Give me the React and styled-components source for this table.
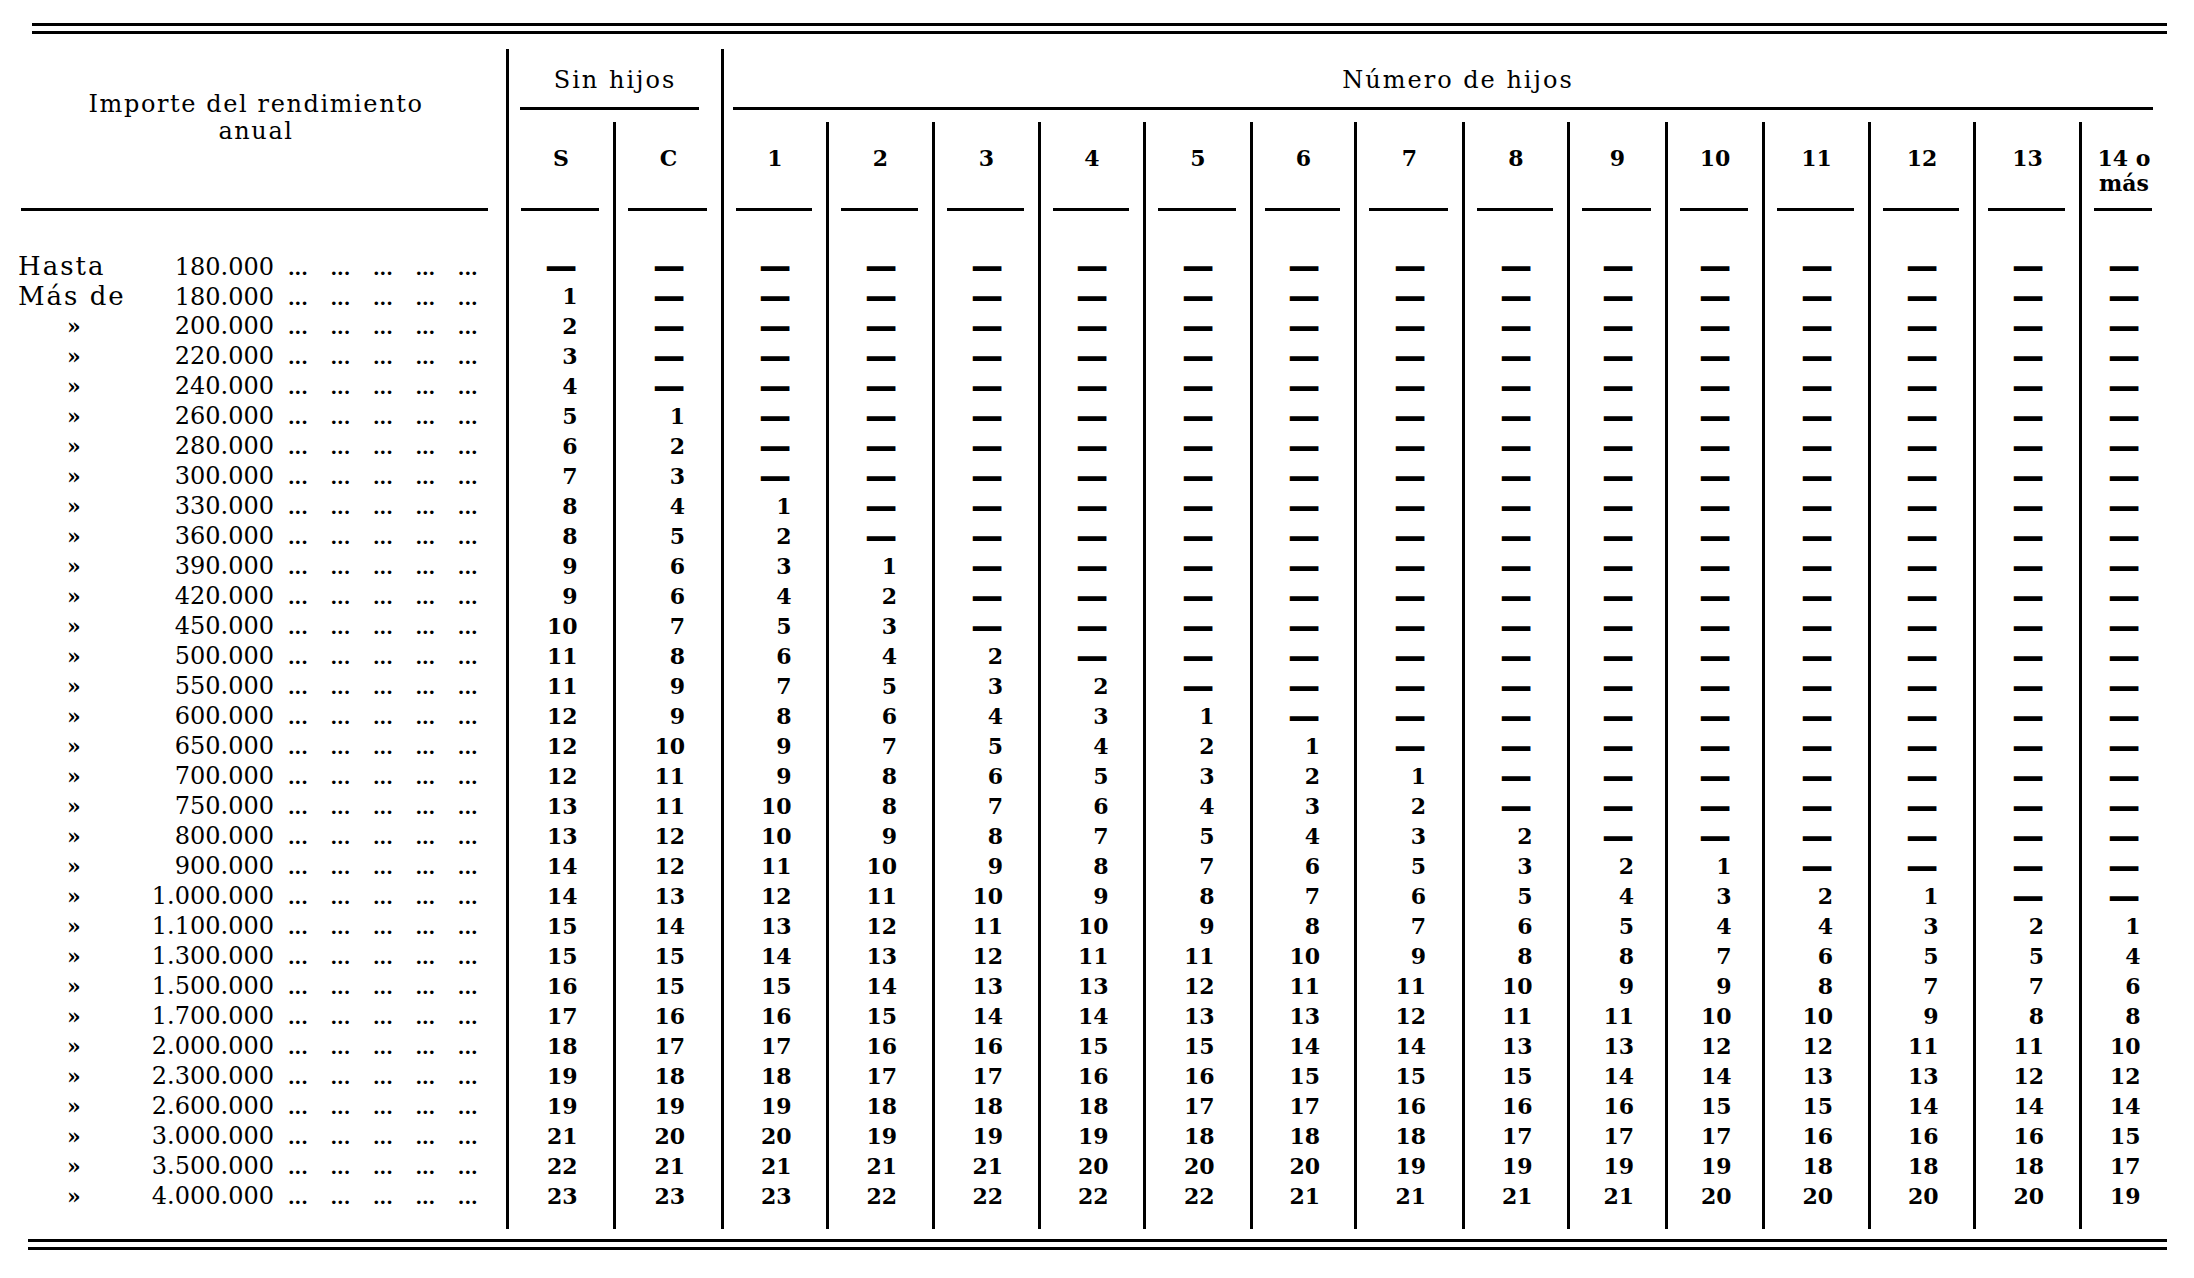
import React from "react";
import styled, { createGlobalStyle } from "styled-components";

const GlobalStyle = createGlobalStyle`
  html, body {
    margin: 0;
    padding: 0;
    background: #fff;
  }
  body {
    color: #000;
    font-family: "DejaVu Serif", "Liberation Serif", serif;
  }
`;

const Page = styled.div`
  width: 2194px;
  height: 1278px;
  box-sizing: border-box;
  padding: 23px 0 0 18px;
  background: #fff;
`;

const DoubleRule = styled.div`
  margin-left: ${(p) => p.$indent}px;
  margin-top: ${(p) => p.$top || 0}px;
  width: ${(p) => p.$width}px;
  height: 5px;
  border-top: 3px solid #000;
  border-bottom: 3px solid #000;
`;

const Table = styled.div`
  display: flex;
  margin-top: 15px;
  height: 1180px;
`;

const LabelColumn = styled.div`
  width: 488px;
  display: flex;
  flex-direction: column;
`;

const LabelHead = styled.div`
  height: 202px;
  display: flex;
  flex-direction: column;
`;

const LabelTitle = styled.div`
  height: 159px;
  box-sizing: border-box;
  padding: 42px 12px 0 0;
  text-align: center;
  font-size: 24px;
  line-height: 27px;
  letter-spacing: 1.6px;
`;

const HeadRule = styled.div`
  height: 3px;
  background: #000;
  margin: ${(p) => p.$margin};
`;

const LabelRow = styled.div`
  height: 30px;
  display: flex;
  align-items: baseline;
  line-height: 30px;
  white-space: nowrap;
`;

const Prefix = styled.span`
  width: 120px;
  flex: none;
  box-sizing: border-box;
  padding-left: ${(p) => (p.$mark ? 49 : 0)}px;
  font-size: ${(p) => (p.$mark ? 22 : 26)}px;
  font-weight: ${(p) => (p.$mark ? 700 : 400)};
  letter-spacing: ${(p) => (p.$mark ? 0 : 2)}px;
`;

const Amount = styled.span`
  width: 136px;
  flex: none;
  text-align: right;
  font-size: 24px;
`;

const Leader = styled.span`
  margin-left: 14px;
  font-size: 19px;
  font-weight: 700;
  word-spacing: 16px;
  white-space: pre;
`;

const Group = styled.div`
  border-left: 3px solid #000;
  display: flex;
  flex-direction: column;
`;

const GroupTitle = styled.div`
  height: 73px;
  display: flex;
  flex-direction: column;
`;

const GroupText = styled.div`
  height: 58px;
  box-sizing: border-box;
  padding: 18px 0 0 ${(p) => p.$shift || 0}px;
  text-align: center;
  font-size: 24px;
  line-height: 27px;
  letter-spacing: 2px;
`;

const SubRow = styled.div`
  display: flex;
  flex: 1;
`;

const SubCol = styled.div`
  width: ${(p) => p.$width}px;
  box-sizing: border-box;
  border-left: ${(p) => (p.$first ? "none" : "3px solid #000")};
  display: flex;
  flex-direction: column;
`;

const SubHead = styled.div`
  height: 129px;
  display: flex;
  flex-direction: column;
`;

const SubLabel = styled.div`
  height: 86px;
  box-sizing: border-box;
  padding-top: 24px;
  text-align: center;
  font-size: 22px;
  font-weight: 700;
  line-height: 25px;
`;

const Cell = styled.div`
  height: 30px;
  display: flex;
  align-items: center;
  justify-content: center;
`;

const Num = styled.span`
  width: 33px;
  text-align: right;
  font-size: 22px;
  font-weight: 700;
  line-height: 30px;
`;

const Dash = styled.span`
  display: inline-block;
  font-size: 22px;
  font-weight: 700;
  line-height: 22px;
  -webkit-text-stroke: 1.6px #000;
  transform: scale(1.35, 1.1);
`;

const amounts = [
  "180.000", "180.000", "200.000", "220.000", "240.000", "260.000", "280.000",
  "300.000", "330.000", "360.000", "390.000", "420.000", "450.000", "500.000",
  "550.000", "600.000", "650.000", "700.000", "750.000", "800.000", "900.000",
  "1.000.000", "1.100.000", "1.300.000", "1.500.000", "1.700.000", "2.000.000",
  "2.300.000", "2.600.000", "3.000.000", "3.500.000", "4.000.000",
];

// n dashes followed by the listed values
const col = (n, values) => [...Array(n).fill(null), ...values];

const sinHijos = [
  {
    label: "S",
    width: 104,
    first: true,
    data: col(1, [1, 2, 3, 4, 5, 6, 7, 8, 8, 9, 9, 10, 11, 11, 12, 12, 12, 13, 13, 14, 14, 15, 15, 16, 17, 18, 19, 19, 21, 22, 23]),
  },
  {
    label: "C",
    width: 108,
    data: col(5, [1, 2, 3, 4, 5, 6, 6, 7, 8, 9, 9, 10, 11, 11, 12, 12, 13, 14, 15, 15, 16, 17, 18, 19, 20, 21, 23]),
  },
];

const numeroHijos = [
  { label: "1", width: 102, first: true, data: col(8, [1, 2, 3, 4, 5, 6, 7, 8, 9, 9, 10, 10, 11, 12, 13, 14, 15, 16, 17, 18, 19, 20, 21, 23]) },
  { label: "2", width: 106, data: col(10, [1, 2, 3, 4, 5, 6, 7, 8, 8, 9, 10, 11, 12, 13, 14, 15, 16, 17, 18, 19, 21, 22]) },
  { label: "3", width: 106, data: col(13, [2, 3, 4, 5, 6, 7, 8, 9, 10, 11, 12, 13, 14, 16, 17, 18, 19, 21, 22]) },
  { label: "4", width: 105, data: col(14, [2, 3, 4, 5, 6, 7, 8, 9, 10, 11, 13, 14, 15, 16, 18, 19, 20, 22]) },
  { label: "5", width: 107, data: col(15, [1, 2, 3, 4, 5, 7, 8, 9, 11, 12, 13, 15, 16, 17, 18, 20, 22]) },
  { label: "6", width: 104, data: col(16, [1, 2, 3, 4, 6, 7, 8, 10, 11, 13, 14, 15, 17, 18, 20, 21]) },
  { label: "7", width: 108, data: col(17, [1, 2, 3, 5, 6, 7, 9, 11, 12, 14, 15, 16, 18, 19, 21]) },
  { label: "8", width: 105, data: col(19, [2, 3, 5, 6, 8, 10, 11, 13, 15, 16, 17, 19, 21]) },
  { label: "9", width: 98, data: col(20, [2, 4, 5, 8, 9, 11, 13, 14, 16, 17, 19, 21]) },
  { label: "10", width: 97, data: col(20, [1, 3, 4, 7, 9, 10, 12, 14, 15, 17, 19, 20]) },
  { label: "11", width: 106, data: col(21, [2, 4, 6, 8, 10, 12, 13, 15, 16, 18, 20]) },
  { label: "12", width: 105, data: col(21, [1, 3, 5, 7, 9, 11, 13, 14, 16, 18, 20]) },
  { label: "13", width: 106, data: col(22, [2, 5, 7, 8, 11, 12, 14, 16, 18, 20]) },
  { label: ["14 o", "más"], width: 87, data: col(22, [1, 4, 6, 8, 10, 12, 14, 15, 17, 19]) },
];

const prefixFor = (i) => {
  if (i === 0) return <Prefix>Hasta</Prefix>;
  if (i === 1) return <Prefix>Más de</Prefix>;
  return <Prefix $mark>»</Prefix>;
};

const DataColumn = ({ column }) => (
  <SubCol $width={column.width} $first={column.first}>
    <SubHead>
      <SubLabel>
        {Array.isArray(column.label)
          ? column.label.map((l) => <div key={l}>{l}</div>)
          : column.label}
      </SubLabel>
      <HeadRule $margin="0 14px 0 12px" />
    </SubHead>
    {column.data.map((v, i) => (
      <Cell key={i}>{v === null ? <Dash>—</Dash> : <Num>{v}</Num>}</Cell>
    ))}
  </SubCol>
);

const App = () => {
  return (
    <Page>
      <GlobalStyle />
      <DoubleRule $indent={14} $width={2135} />
      <Table>
        <LabelColumn>
          <LabelHead>
            <LabelTitle>
              Importe del rendimiento
              <br />
              anual
            </LabelTitle>
            <HeadRule $margin="0 18px 0 3px" />
          </LabelHead>
          {amounts.map((a, i) => (
            <LabelRow key={i}>
              {prefixFor(i)}
              <Amount>{a}</Amount>
              <Leader>... ... ... ... ...</Leader>
            </LabelRow>
          ))}
        </LabelColumn>

        <Group>
          <GroupTitle>
            <GroupText>Sin hijos</GroupText>
            <HeadRule $margin="0 22px 0 11px" />
          </GroupTitle>
          <SubRow>
            {sinHijos.map((c) => (
              <DataColumn key={c.label} column={c} />
            ))}
          </SubRow>
        </Group>

        <Group>
          <GroupTitle>
            <GroupText $shift={26}>Número de hijos</GroupText>
            <HeadRule $margin="0 13px 0 9px" />
          </GroupTitle>
          <SubRow>
            {numeroHijos.map((c, i) => (
              <DataColumn key={i} column={c} />
            ))}
          </SubRow>
        </Group>
      </Table>
      <DoubleRule $indent={10} $width={2139} $top={10} />
    </Page>
  );
};

export default App;
